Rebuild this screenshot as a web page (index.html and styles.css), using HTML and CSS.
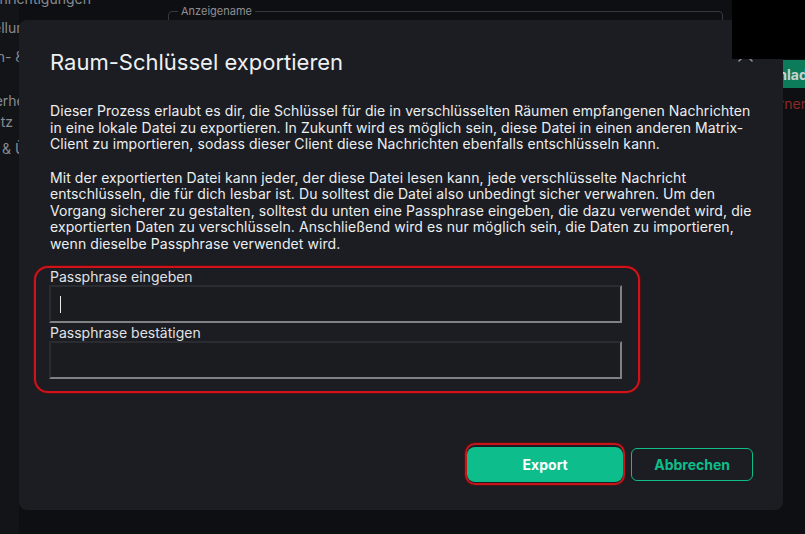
FILE: index.html
```html
<!DOCTYPE html>
<html lang="de">
<head>
<meta charset="utf-8">
<title>Raum-Schlüssel exportieren</title>
<link rel="stylesheet" href="styles.css">
</head>
<body>
<div class="page">
  <nav class="sidebar">
    <div class="nav-item">Benachrichtigungen</div>
    <div class="nav-item">Darstellung</div>
    <div class="nav-item">Sprach- &amp;<br>Video</div>
    <div class="nav-item tall">Sicherheit &amp;<br><span class="wrap-line">Datenschutz</span></div>
    <div class="nav-item last">Hilfe &amp; Über</div>
  </nav>
  <main class="content">
    <fieldset class="name-field">
      <legend>Anzeigename</legend>
      <div class="name-input"></div>
    </fieldset>
    <div class="avatar-actions">
      <button class="upload-btn">Hochladen</button>
      <span class="remove-link">Entfernen</span>
    </div>
  </main>
</div>

<div class="dialog" role="dialog">
  <button class="close-btn" aria-label="Schließen">
    <svg width="15" height="15" viewBox="0 0 15 15"><path d="M1 1 L14 14 M14 1 L1 14" stroke="#8b8f95" stroke-width="1.6" stroke-linecap="round" fill="none"/></svg>
  </button>
  <h2 class="dialog-title">Raum-Schlüssel exportieren</h2>
  <p class="dialog-text">Dieser Prozess erlaubt es dir, die Schlüssel für die in verschlüsselten Räumen empfangenen Nachrichten in eine lokale Datei zu exportieren. In Zukunft wird es möglich sein, diese Datei in einen anderen Matrix-Client zu importieren, sodass dieser Client diese Nachrichten ebenfalls entschlüsseln kann.</p>
  <p class="dialog-text second">Mit der exportierten Datei kann jeder, der diese Datei lesen kann, jede verschlüsselte Nachricht entschlüsseln, die für dich lesbar ist. Du solltest die Datei also unbedingt sicher verwahren. Um den Vorgang sicherer zu gestalten, solltest du unten eine Passphrase eingeben, die dazu verwendet wird, die exportierten Daten zu verschlüsseln. Anschließend wird es nur möglich sein, die Daten zu importieren, wenn dieselbe Passphrase verwendet wird.</p>
  <div class="fields-ring">
    <label class="field-label">Passphrase eingeben</label>
    <div class="field-input"><span class="caret"></span></div>
    <label class="field-label">Passphrase bestätigen</label>
    <div class="field-input"></div>
  </div>
  <div class="dialog-buttons">
    <span class="export-ring"><button class="btn-primary">Export</button></span>
    <button class="btn-outline">Abbrechen</button>
  </div>
</div>

<div class="black-box"></div>
</body>
</html>
```

FILE: styles.css
```css
* { box-sizing: border-box; }

html, body {
  margin: 0;
  width: 805px;
  height: 534px;
  overflow: hidden;
  background: #0d0f12;
  font-family: Inter, "Noto Sans", sans-serif;
}

.page {
  display: flex;
  height: 534px;
}

.sidebar {
  flex: none;
  width: 61px;
  margin-left: -42px;
  margin-top: -16px;
  background: #121418;
  color: #878b91;
  font-size: 14px;
}

.nav-item {
  line-height: 15px;
  padding: 7px 0;
  white-space: nowrap;
}

.nav-item.tall {
  line-height: 21px;
  padding: 4px 0 4px 8px;
}

.nav-item.last {
  padding-top: 5px;
  padding-left: 10px;
}

.wrap-line {
  margin-left: -36px;
}

.content {
  flex: none;
  display: flex;
  align-items: flex-start;
  margin-left: 149px;
  padding-top: 5px;
}

.name-field {
  flex: none;
  width: 555px;
  margin: 0;
  padding: 0 9px 10px;
  border: 1px solid #35383d;
  border-radius: 4px;
}

.name-field legend {
  padding: 0 3px;
  font-size: 11px;
  line-height: 13px;
  color: #8d9096;
}

.name-input {
  height: 30px;
}

.avatar-actions {
  flex: none;
  display: flex;
  flex-direction: column;
  align-items: flex-start;
  margin-left: 10px;
  padding-top: 55px;
}

.upload-btn {
  height: 28px;
  padding: 0 18px;
  border: none;
  border-radius: 6px;
  background: #0b7b5a;
  color: #c9d3cf;
  font: 700 14px Inter, sans-serif;
}

.remove-link {
  margin-top: 8px;
  margin-left: 12px;
  font-size: 14px;
  line-height: 16px;
  color: #8a2a2a;
}

.dialog {
  position: absolute;
  left: 19px;
  top: 20px;
  width: 764px;
  padding: 28px 30px 25px 31px;
  background: #1b1d22;
  border-radius: 8px;
  color: #eceef0;
}

.close-btn {
  position: absolute;
  top: 27px;
  right: 30px;
  width: 15px;
  height: 15px;
  padding: 0;
  border: none;
  background: none;
  display: flex;
}

.dialog-title {
  margin: 0;
  font-size: 22px;
  line-height: 28px;
  font-weight: 400;
  color: #eef0f2;
}

.dialog-text {
  margin: 27px 0 0;
  font-size: 14px;
  letter-spacing: 0.08px;
  line-height: 16.5px;
}

.dialog-text.second {
  margin-top: 17px;
}

.fields-ring {
  width: fit-content;
  margin: 14px 0 0 -16px;
  padding: 1px 16px 10px 13px;
  border: 2px solid #d0131a;
  border-radius: 14px;
  box-shadow: 0 0 0 1px rgba(110, 12, 12, 0.6);
}

.field-label {
  display: block;
  padding-left: 1px;
  font-size: 14px;
  line-height: 16px;
  color: #e0e2e5;
}

.field-input {
  width: 573px;
  height: 38px;
  display: flex;
  align-items: center;
  padding: 0 9px;
  background: #1a1c20;
  border-top: 2px solid #2a2c31;
  border-left: 2px solid #2a2c31;
  border-bottom: 2px solid #7f8184;
  border-right: 2px solid #7f8184;
  margin-bottom: 2px;
}

.caret {
  width: 1px;
  height: 17px;
  background: #e8e8e8;
}

.dialog-buttons {
  display: flex;
  justify-content: flex-end;
  align-items: center;
  gap: 6px;
  margin-top: 50px;
}

.export-ring {
  display: flex;
  padding: 2px 0 1px;
  border: 2px solid #c8141b;
  border-radius: 10px;
  box-shadow: 0 0 0 1px rgba(110, 12, 12, 0.5);
}

.btn-primary {
  width: 156px;
  height: 35px;
  border: none;
  border-radius: 8px;
  background: #0dbd8b;
  color: #ffffff;
  font: 700 14px Inter, sans-serif;
}

.btn-outline {
  height: 33px;
  padding: 0 22px;
  border: 1px solid #0dbd8b;
  border-radius: 6px;
  background: transparent;
  color: #0dbd8b;
  font: 700 14px Inter, sans-serif;
}

.black-box {
  position: absolute;
  top: 0;
  right: 0;
  width: 73px;
  height: 59px;
  background: #000000;
}
```
